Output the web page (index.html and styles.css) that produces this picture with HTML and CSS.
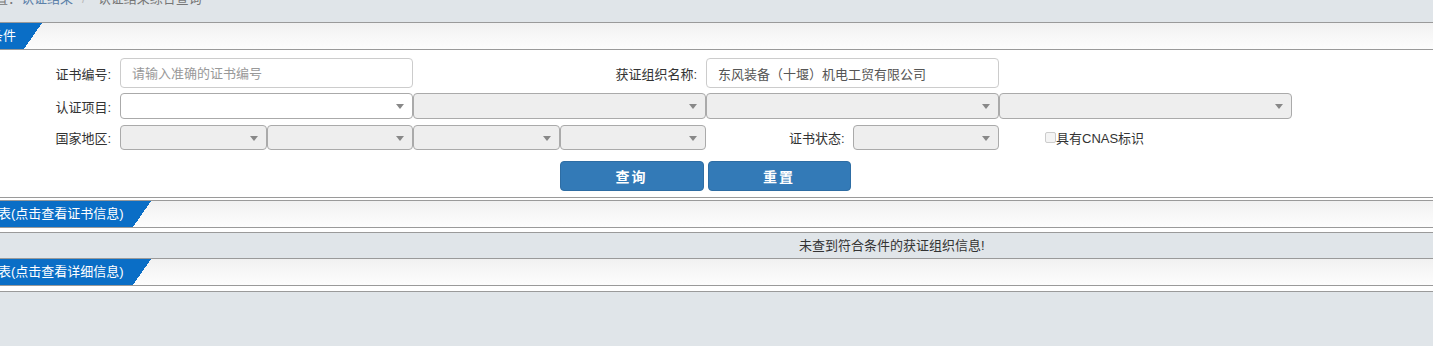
FILE: index.html
```html
<!DOCTYPE html>
<html lang="zh-CN">
<head>
<meta charset="UTF-8" />
<meta name="viewport" content="width=device-width, initial-scale=1.0"/>
<link rel="stylesheet" href="styles.css">
</head>
<body>

<div class="crumb">
  <div class="crumb__text">位置：<a href="#" class="crumb__link">认证结果</a><span class="crumb__sep">/</span><span class="crumb__cur">认证结果综合查询</span></div>
</div>

<!-- 查询条件 -->
<div class="panel">
  <div class="panel__head"><span class="tab tab--query">查询条件</span></div>
  <form class="search">
    <label class="lbl lbl--first">证书编号:</label>
    <input class="txt span2" type="text" placeholder="请输入准确的证书编号">
    <label class="lbl span2">获证组织名称:</label>
    <input class="txt span2" type="text" value="东风装备（十堰）机电工贸有限公司">

    <label class="lbl lbl--first">认证项目:</label>
    <div class="sel sel--on span2"></div>
    <div class="sel span2"></div>
    <div class="sel span2"></div>
    <div class="sel span2"></div>

    <label class="lbl lbl--first">国家地区:</label>
    <div class="sel sel--short"></div>
    <div class="sel sel--short"></div>
    <div class="sel sel--short"></div>
    <div class="sel sel--short"></div>
    <label class="lbl lbl--state">证书状态:</label>
    <div class="sel sel--short"></div>
    <label class="chk span2"><span class="chk__box"></span>具有CNAS标识</label>

    <div class="btns">
      <button type="button" class="btn btn--query">查询</button>
      <button type="button" class="btn btn--reset">重置</button>
    </div>
  </form>
</div>

<div class="gap"></div>

<!-- 证书列表 -->
<div class="panel panel--list">
  <div class="panel__head"><span class="tab tab--cert">证书列表(点击查看证书信息)</span></div>
  <div class="panel__body"></div>
</div>
<div class="msg">未查到符合条件的获证组织信息!</div>

<!-- 组织列表 -->
<div class="panel panel--org">
  <div class="panel__head"><span class="tab tab--org">获证组织列表(点击查看详细信息)</span></div>
  <div class="panel__body panel__body--org"></div>
</div>

</body>
</html>
```

FILE: styles.css
```css
:root {
  --page-bg: #e0e5e9;
  --line: #9a9a9a;
  --blue: #0a6ec6;
  --btn: #337ab7;
  --text: #333;
}

body {
  margin: 0;
  background: var(--page-bg);
  font-family: "Liberation Sans", "Noto Sans CJK SC", sans-serif;
  font-size: 13px;
  color: var(--text);
}

/* 面包屑 */
.crumb {
  height: 22px;
  overflow: hidden;
}

.crumb__text {
  margin: -11px 0 0 -18px;
  line-height: 20px;
  color: #777;
  white-space: nowrap;
}

.crumb__link {
  color: #5b80a8;
  text-decoration: none;
}

.crumb__sep {
  color: #bbb;
  padding: 0 12px 0 9px;
}

/* 面板 */
.panel {
  border-top: 1px solid var(--line);
  border-bottom: 1px solid var(--line);
}

.panel__head {
  height: 26px;
  background: linear-gradient(#f1f1f1, #fdfdfd);
  border-bottom: 1px solid var(--line);
  overflow: hidden;
  white-space: nowrap;
}

.panel__body {
  height: 4px;
  background: #fff;
}

.panel--org {
  border-top: 0;
}

.panel__body--org {
  height: 5px;
}

.gap {
  height: 2px;
  background: #fff;
}

.tab {
  position: relative;
  display: inline-block;
  height: 26px;
  line-height: 26px;
  padding: 0 8px 0 10px;
  background: var(--blue);
  color: #fff;
}

.tab::after {
  content: "";
  position: absolute;
  top: 0;
  left: 100%;
  width: 18px;
  height: 26px;
  background: linear-gradient(to bottom right, var(--blue) 50%, transparent 50%);
}

.tab--query { margin-left: -46px; }
.tab--cert  { margin-left: -51px; padding-right: 9px; }
.tab--org   { margin-left: -77px; padding-right: 9px; }

/* 查询表单 */
.search {
  box-sizing: border-box;
  height: 147px;
  margin: 0;
  padding-top: 8px;
  background: #fff;
  display: grid;
  grid-template-columns: 120px repeat(8, 146.5px);
  row-gap: 5px;
  align-items: center;
  align-content: start;
}

.span2 {
  grid-column: span 2;
}

.lbl {
  text-align: right;
  padding-right: 9px;
  white-space: nowrap;
}

.lbl--first {
  grid-column: 1;
}

.lbl--state {
  padding-right: 8px;
}

.txt {
  box-sizing: border-box;
  height: 30px;
  margin: 0;
  padding: 0 11px;
  border: 1px solid #ccc;
  border-radius: 4px;
  font: inherit;
  color: #555;
  outline: none;
}

.txt::placeholder {
  color: #999;
}

.sel {
  position: relative;
  box-sizing: border-box;
  height: 26px;
  border: 1px solid #aaa;
  border-radius: 4px;
  background: #eee;
}

.sel--short {
  height: 25px;
  margin-top: 1px;
}

.sel--on {
  background: #fff;
}

.sel::after {
  content: "";
  position: absolute;
  right: 8px;
  top: 10px;
  border-left: 4px solid transparent;
  border-right: 4px solid transparent;
  border-top: 5px solid #888;
}

.chk {
  display: flex;
  align-items: center;
  padding-left: 46px;
  white-space: nowrap;
}

.chk__box {
  box-sizing: border-box;
  width: 11px;
  height: 11px;
  border: 1px solid #ccc;
  border-radius: 2px;
  background: #f4f4f4;
}

.btns {
  grid-column: 5 / 8;
  display: flex;
  gap: 4px;
  margin-top: 6px;
}

.btn {
  width: 144px;
  height: 30px;
  margin: 0;
  border: 1px solid #2e6da4;
  border-radius: 4px;
  background: var(--btn);
  color: #fff;
  font-family: inherit;
  font-size: 14px;
  font-weight: bold;
  letter-spacing: 2px;
  cursor: pointer;
}

.btn--reset {
  width: 143px;
}

/* 提示信息 */
.msg {
  height: 25px;
  line-height: 25px;
  padding-left: 799px;
  border-bottom: 1px solid var(--line);
  white-space: nowrap;
}
```
